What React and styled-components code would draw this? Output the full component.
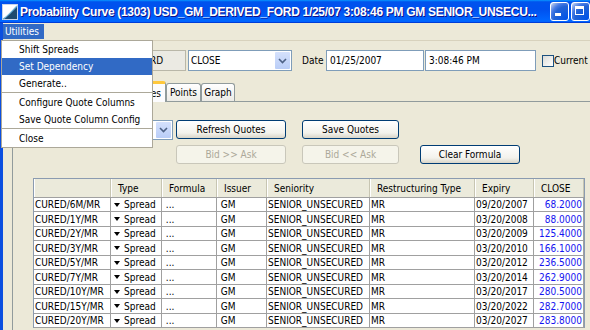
import styled, { createGlobalStyle } from "styled-components";

const GlobalStyle = createGlobalStyle`
  html, body {
    margin: 0;
    padding: 0;
    background: #ece9d8;
  }
  #root {
    width: 590px;
    height: 330px;
    overflow: hidden;
    position: relative;
  }
`;

const FONT = `"DejaVu Sans Condensed", "Liberation Sans", sans-serif`;

const Window = styled.div`
  width: 615px;
  height: 330px;
  display: flex;
  flex-direction: column;
  font-family: ${FONT};
  font-size: 10px;
  color: #000;
  background: #ece9d8;
`;

const TitleBar = styled.div`
  height: 23px;
  flex: none;
  display: flex;
  align-items: center;
  padding: 0 4px 0 2px;
  background: linear-gradient(180deg, #0997ff, #0053ee 8%, #0050ee 40%, #0066ff 88%, #0066ff 93%, #005bff 95%, #003dd7 96%, #003dd7);
`;

const Title = styled.div`
  flex: 1;
  min-width: 0;
  margin-left: 2px;
  overflow: hidden;
  white-space: nowrap;
  font-family: "Liberation Sans", sans-serif;
  font-weight: bold;
  font-size: 12px;
  letter-spacing: -0.3px;
  color: #fff;
  text-shadow: 1px 1px #0f1089;
`;

const CaptionButton = styled.div`
  width: 19px;
  height: 19px;
  box-sizing: border-box;
  margin-left: 2px;
  border: 1px solid #fff;
  border-radius: 3px;
  position: relative;
  background: ${(p) =>
    p.close
      ? "radial-gradient(circle at 90% 90%, #cc4600 0%, #dc6527 55%, #cd7546 70%, #ffccb2 90%, #fff 100%)"
      : "radial-gradient(circle at 90% 90%, #0054e9 0%, #2263d5 55%, #4479e4 70%, #a3bbec 90%, #fff 100%)"};
`;

const MinGlyph = styled.span`
  position: absolute;
  left: 4px;
  bottom: 4px;
  width: 6px;
  height: 3px;
  background: #fff;
`;

const MaxGlyph = styled.span`
  position: absolute;
  left: 3px;
  top: 3px;
  width: 9px;
  height: 9px;
  box-sizing: border-box;
  border: 1px solid #fff;
  border-top-width: 3px;
`;

const Frame = styled.div`
  flex: 1;
  display: flex;
  flex-direction: column;
  border-left: 3px solid #0b4fe0;
`;

const MenuBar = styled.div`
  height: 18px;
  flex: none;
  display: flex;
  align-items: stretch;
  padding: 1px 0;
  box-sizing: border-box;
  border-bottom: 1px solid #d8d2bd;
`;

const MenuTitle = styled.div`
  display: flex;
  align-items: center;
  padding: 0 5px 0 2px;
  background: ${(p) => (p.open ? "#316ac5" : "transparent")};
  color: ${(p) => (p.open ? "#fff" : "#000")};
`;

const Body = styled.div`
  flex: 1;
  display: flex;
  flex-direction: column;
  padding: 9px 0 0 9px;
`;

const FieldRow = styled.div`
  display: flex;
  align-items: center;
  height: 21px;
  padding-left: ${(p) => p.indent}px;
`;

const Label = styled.div`
  width: ${(p) => p.w}px;
  margin-left: ${(p) => p.ml || 0}px;
  flex: none;
  white-space: nowrap;
  overflow: hidden;
`;

const TextField = styled.div`
  flex: none;
  width: ${(p) => p.w}px;
  height: 21px;
  margin-left: ${(p) => p.ml || 0}px;
  box-sizing: border-box;
  border: 1px solid ${(p) => (p.readOnly ? "#b9b7a8" : "#7f9db9")};
  background: ${(p) => (p.readOnly ? "#ebeae3" : "#fff")};
  padding: 0 3px;
  display: flex;
  align-items: center;
  white-space: nowrap;
  overflow: hidden;
`;

const Combo = styled.div`
  flex: none;
  width: ${(p) => p.w}px;
  height: ${(p) => p.h || 21}px;
  margin-left: ${(p) => p.ml || 0}px;
  box-sizing: border-box;
  border: 1px solid #7f9db9;
  background: #fff;
  display: flex;
  align-items: stretch;
`;

const ComboText = styled.div`
  flex: 1;
  display: flex;
  align-items: center;
  padding-left: 2px;
`;

const ComboArrow = styled.div`
  width: 15px;
  margin: 1px;
  background: linear-gradient(180deg, #d5e1fc, #b9cdf7);
  border-radius: 1px;
  display: flex;
  align-items: center;
  justify-content: center;
`;

const CheckBox = styled.div`
  flex: none;
  width: 12px;
  height: 12px;
  margin-left: 6px;
  box-sizing: border-box;
  border: 1px solid #1c5180;
  background: linear-gradient(135deg, #dcdcd7, #fff);
`;

const TabStrip = styled.div`
  display: flex;
  align-items: flex-end;
  height: 20px;
  margin-top: 10px;
  padding-left: ${(p) => p.indent}px;
  position: relative;
  z-index: 1;
`;

const Tab = styled.div`
  width: ${(p) => p.w}px;
  height: ${(p) => (p.selected ? 21 : 18)}px;
  margin-bottom: ${(p) => (p.selected ? -1 : 0)}px;
  box-sizing: border-box;
  border: 1px solid #919b9c;
  border-bottom: none;
  border-top: ${(p) => (p.selected ? "3px solid #ffc83c" : "1px solid #919b9c")};
  border-radius: 3px 3px 0 0;
  background: ${(p) => (p.selected ? "#fcfcfe" : "linear-gradient(180deg, #fff, #ecebe6)")};
  display: flex;
  align-items: center;
  justify-content: center;
  white-space: nowrap;
`;

const TabPanel = styled.div`
  flex: 1;
  border-top: 1px solid #919b9c;
  border-left: 1px solid #919b9c;
  padding-top: 18px;
`;

const ButtonGrid = styled.div`
  display: grid;
  grid-template-columns: 123px 126px 118px 100px;
  grid-template-rows: 19px 19px;
  row-gap: 6px;
  margin-left: 40px;
`;

const Button = styled.div`
  width: ${(p) => p.w}px;
  height: ${(p) => p.h || 19}px;
  grid-column: ${(p) => p.col};
  box-sizing: border-box;
  border: 1px solid ${(p) => (p.disabled ? "#c9c7ba" : "#003c74")};
  border-radius: 3px;
  background: ${(p) =>
    p.disabled ? "#f5f4ea" : "linear-gradient(180deg, #fff, #f3f2ec 70%, #d9d5c8)"};
  color: ${(p) => (p.disabled ? "#aca899" : "#000")};
  display: flex;
  align-items: center;
  justify-content: center;
  white-space: nowrap;
`;

const TableBox = styled.div`
  width: 552px;
  margin: 14px 0 0 20px;
  box-sizing: border-box;
  border: 1px solid #8b9bb0;
  border-bottom: none;
  background: #ece9d8;
`;

const HeadRow = styled.div`
  display: grid;
  grid-template-columns: ${(p) => p.columns};
  height: 19px;
  box-sizing: border-box;
  border-bottom: 1px solid #a0a0a0;
  background: #ebeadb;
`;

const HeadCell = styled.div`
  box-sizing: border-box;
  border-right: 1px solid #c7c5b2;
  box-shadow: inset 1px 0 #fff;
  padding-left: 7px;
  display: flex;
  align-items: center;
  white-space: nowrap;
  overflow: hidden;
`;

const Row = styled.div`
  display: grid;
  grid-template-columns: ${(p) => p.columns};
  height: ${(p) => (p.tall ? 15 : 14)}px;
  box-sizing: border-box;
  border-bottom: 1px solid #a0a0a0;
  background: #fff;
`;

const Cell = styled.div`
  box-sizing: border-box;
  border-right: 1px solid #a0a0a0;
  padding: 0 ${(p) => (p.right ? 1 : 0)}px 0 ${(p) => (p.right ? 0 : 1)}px;
  display: flex;
  align-items: center;
  justify-content: ${(p) => (p.right ? "flex-end" : "flex-start")};
  color: ${(p) => p.color || "#000"};
  white-space: nowrap;
  overflow: hidden;
`;

const DropTriangle = styled.span`
  width: 0;
  height: 0;
  margin: 0 4px 0 2px;
  border-left: 3.5px solid transparent;
  border-right: 3.5px solid transparent;
  border-top: 4px solid #000;
`;

const DropMenu = styled.div`
  position: absolute;
  top: 40px;
  left: 1px;
  width: 152px;
  box-sizing: border-box;
  border: 1px solid #aca899;
  background: #fff;
  font-family: ${FONT};
  font-size: 10px;
  z-index: 10;
`;

const MenuItem = styled.div`
  height: 17px;
  display: flex;
  align-items: center;
  padding-left: 17px;
  background: ${(p) => (p.active ? "#316ac5" : "transparent")};
  color: ${(p) => (p.active ? "#fff" : "#000")};
`;

const MenuSeparator = styled.div`
  height: 1px;
  margin: 0 0 1px;
  background: #aca899;
`;

const columns = "77px 51px 55px 50px 103px 105px 59px 50px";
const headers = ["", "Type", "Formula", "Issuer", "Seniority", "Restructuring Type", "Expiry", "CLOSE"];

const quotes = [
  ["CURED/6M/MR", "09/20/2007", "68.2000"],
  ["CURED/1Y/MR", "03/20/2008", "88.0000"],
  ["CURED/2Y/MR", "03/20/2009", "125.4000"],
  ["CURED/3Y/MR", "03/20/2010", "166.1000"],
  ["CURED/5Y/MR", "03/20/2012", "236.5000"],
  ["CURED/7Y/MR", "03/20/2014", "262.9000"],
  ["CURED/10Y/MR", "03/20/2017", "280.5000"],
  ["CURED/15Y/MR", "03/20/2022", "282.7000"],
  ["CURED/20Y/MR", "03/20/2027", "283.8000"],
];

function AppIcon() {
  return (
    <svg width="16" height="16" viewBox="0 0 16 16">
      <rect x="0.5" y="0.5" width="15" height="15" fill="#fff" stroke="#c8d4e8" />
      <path d="M1 15 C5 13 9 8 15 2 L15 15 Z" fill="#1d4a6e" />
      <path d="M1 15 C5 13 9 8 15 2" fill="none" stroke="#6fb4d8" strokeWidth="1.2" />
    </svg>
  );
}

function Chevron() {
  return (
    <svg width="9" height="6" viewBox="0 0 9 6">
      <path d="M1 1 L4.5 4.5 L8 1" fill="none" stroke="#4d6185" strokeWidth="1.6" />
    </svg>
  );
}

export default function App() {
  return (
    <>
      <GlobalStyle />
      <Window>
        <TitleBar>
          <AppIcon />
          <Title>Probability Curve (1303) USD_GM_DERIVED_FORD 1/25/07 3:08:46 PM GM SENIOR_UNSECU...</Title>
          <CaptionButton>
            <MinGlyph />
          </CaptionButton>
          <CaptionButton>
            <MaxGlyph />
          </CaptionButton>
          <CaptionButton close />
        </TitleBar>
        <Frame>
          <MenuBar>
            <MenuTitle open>Utilities</MenuTitle>
          </MenuBar>
          <Body>
            <FieldRow indent={34}>
              <TextField readOnly w={140}>USD_GM_DERIVED_FORD</TextField>
              <Combo w={104} ml={2}>
                <ComboText>CLOSE</ComboText>
                <ComboArrow>
                  <Chevron />
                </ComboArrow>
              </Combo>
              <Label w={24} ml={10}>Date</Label>
              <TextField w={98}>01/25/2007</TextField>
              <TextField w={111} ml={1}>3:08:46 PM</TextField>
              <CheckBox />
              <Label w={40}>Current</Label>
            </FieldRow>
            <TabStrip indent={112}>
              <Tab w={42} selected>Quotes</Tab>
              <Tab w={35}>Points</Tab>
              <Tab w={34}>Graph</Tab>
            </TabStrip>
            <TabPanel>
              <ButtonGrid>
                <Combo w={120} h={20}>
                  <ComboText />
                  <ComboArrow>
                    <Chevron />
                  </ComboArrow>
                </Combo>
                <Button w={110}>Refresh Quotes</Button>
                <Button w={97}>Save Quotes</Button>
                <Button w={110} col={2} disabled>Bid &gt;&gt; Ask</Button>
                <Button w={97} disabled>Bid &lt;&lt; Ask</Button>
                <Button w={100}>Clear Formula</Button>
              </ButtonGrid>
              <TableBox>
                <HeadRow columns={columns}>
                  {headers.map((h, i) => (
                    <HeadCell key={i}>{h}</HeadCell>
                  ))}
                </HeadRow>
                {quotes.map(([name, expiry, close], i) => (
                  <Row key={name} columns={columns} tall={i % 2 === 1}>
                    <Cell>{name}</Cell>
                    <Cell>
                      <DropTriangle />
                      Spread
                    </Cell>
                    <Cell>&nbsp;...</Cell>
                    <Cell>&nbsp;GM</Cell>
                    <Cell>SENIOR_UNSECURED</Cell>
                    <Cell>MR</Cell>
                    <Cell>{expiry}</Cell>
                    <Cell right color="#1414f0">{close}</Cell>
                  </Row>
                ))}
              </TableBox>
            </TabPanel>
          </Body>
        </Frame>
      </Window>
      <DropMenu>
        <MenuItem>Shift Spreads</MenuItem>
        <MenuItem active>Set Dependency</MenuItem>
        <MenuItem>Generate..</MenuItem>
        <MenuSeparator />
        <MenuItem>Configure Quote Columns</MenuItem>
        <MenuItem>Save Quote Column Config</MenuItem>
        <MenuSeparator />
        <MenuItem>Close</MenuItem>
      </DropMenu>
    </>
  );
}
